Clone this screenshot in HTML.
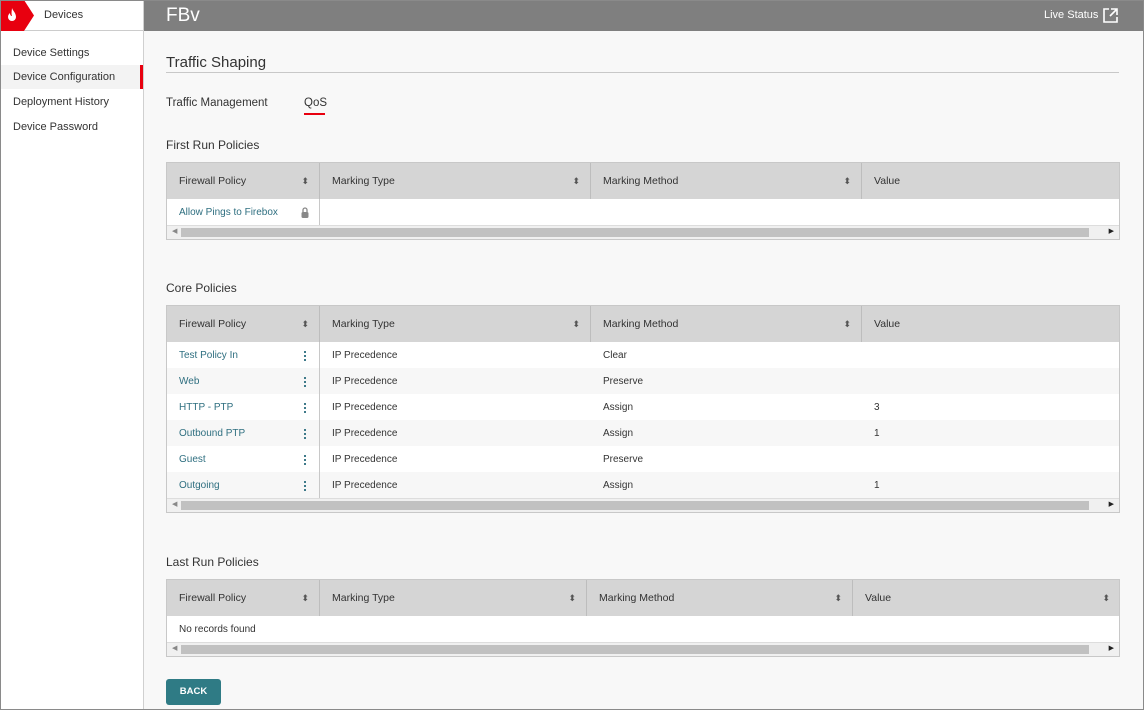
<!DOCTYPE html>
<html><head><meta charset="utf-8"><style>
*{box-sizing:border-box;margin:0;padding:0}
body{width:1144px;height:710px;overflow:hidden;background:#f8f8f8;font-family:"Liberation Sans",sans-serif;font-size:10.5px;color:#333;position:relative}
.frame{position:absolute;inset:0;border:1px solid #8a8a8a;pointer-events:none;z-index:9}
.side{position:absolute;left:0;top:0;width:144px;height:710px;background:#fff;border-right:1px solid #d0d0d0}
.sidehead{height:31px;border-bottom:1px solid #ccc;position:relative}
.logo{position:absolute;left:0;top:0;width:34px;height:31px;background:#e8000f;clip-path:polygon(0 0,24px 0,34px 15.5px,24px 31px,0 31px)}
.sidehead span{position:absolute;left:44px;top:9px;font-size:11px}
.nav{position:absolute;left:13px;font-size:11px;color:#333}
.navsel{position:absolute;left:0;top:65px;width:143px;height:24px;background:#f3f3f3;border-right:3px solid #e8000f}
.top{position:absolute;left:144px;top:0;width:1000px;height:31px;background:#7f7f7f;color:#fff}
.top .t{position:absolute;left:22px;top:5px;font-size:19px}
.top .ls{position:absolute;left:900px;top:9px;font-size:11px}
h2{position:absolute;left:166px;top:54px;font-size:15px;font-weight:normal;color:#333}
.rule{position:absolute;left:166px;top:72px;width:953px;height:1px;background:#c8c8c8}
.lbl{position:absolute;font-size:12px;color:#333}
.tbl{position:absolute;left:166px;width:954px;border:1px solid #c8c8c8;background:#fff}
.hd{height:36px;background:#d5d5d5;position:relative}
.hd div{position:absolute;top:0;height:36px;line-height:36px;padding-left:12px;border-right:1px solid #bdbdbd;font-size:10.5px}
.hd div i{position:absolute;right:10px;font-style:normal;font-size:9px;color:#555}
.row{height:26px;position:relative;line-height:26px}
.row.alt{background:#f7f7f7}
.row div{position:absolute;top:1px;height:26px;padding-left:12px;font-size:10px}
.row .c1{color:#2f6f80}
.vl{position:absolute;top:36px;width:1px;background:#c8c8c8}
.sb{height:14px;background:#f0f0f0;position:relative;border-top:1px solid #ddd}
.sb .bar{position:absolute;left:14px;top:2px;width:908px;height:9px;background:#c1c1c1}
.sb .l{position:absolute;left:5px;top:1px;font-size:7px;color:#888}
.sb .r{position:absolute;right:5px;top:1px;font-size:7px;color:#222}
.dots{position:absolute;left:137px;top:8px;width:2px;height:11px;background:radial-gradient(circle,#2f6f80 1px,transparent 1.2px) 0 0/2px 4px}
.btn{position:absolute;left:166px;top:679px;width:55px;height:26px;background:#2f7b85;border-radius:3px;color:#fff;font-weight:bold;font-size:9.5px;text-align:center;line-height:26px}
</style></head><body>
<div class="side">
 <div class="sidehead"><div class="logo"><svg width="24" height="31" viewBox="0 0 24 31"><path d="M12 8c1 3 4 5 4 9a4 4 0 0 1-8 0c0-2 1-3 2-4 0 2 1 3 2 3-1-3 0-6 0-8z" fill="#fff"/></svg></div><span>Devices</span></div>
 <div class="navsel"></div>
 <div class="nav" style="top:47px">Device Settings</div>
 <div class="nav" style="top:71px">Device Configuration</div>
 <div class="nav" style="top:96px">Deployment History</div>
 <div class="nav" style="top:121px">Device Password</div>
</div>
<div class="top"><div class="t">FBv</div><div class="ls">Live Status</div>
<svg style="position:absolute;left:959px;top:8px" width="15" height="15" viewBox="0 0 15 15" fill="none" stroke="#fff" stroke-width="1.6"><path d="M6 1H1v13h13V9M8 1h6v6M14 1L7 8"/></svg></div>
<h2>Traffic Shaping</h2><div class="rule"></div>
<div class="lbl" style="left:166px;top:97px;font-size:11.5px">Traffic Management</div>
<div class="lbl" style="left:304px;top:97px;font-size:11.5px">QoS</div>
<div style="position:absolute;left:304px;top:113px;width:21px;height:2px;background:#e8000f"></div>
<div class="lbl" style="left:166px;top:138px">First Run Policies</div>

<div class="tbl" style="top:162px">
 <div class="hd"><div style="left:0;width:153px">Firewall Policy<i>⬍</i></div><div style="left:153px;width:271px">Marking Type<i>⬍</i></div><div style="left:424px;width:271px">Marking Method<i>⬍</i></div><div style="left:695px;width:258px;border:none">Value</div></div>
 <div class="row"><div class="c1">Allow Pings to Firebox</div><svg style="position:absolute;left:134px;top:8px" width="8" height="11" viewBox="0 0 8 11"><path d="M2 5V3a2 2 0 0 1 4 0v2" fill="none" stroke="#888" stroke-width="1.3"/><rect x="0.5" y="5" width="7" height="6" rx="1.5" fill="#888"/></svg></div>
 <div class="vl" style="left:152px;height:26px"></div>
 <div class="sb"><span class="l">◀</span><div class="bar"></div><span class="r">▶</span></div>
</div>

<div class="lbl" style="left:166px;top:281px">Core Policies</div>
<div class="tbl" style="top:305px">
 <div class="hd"><div style="left:0;width:153px">Firewall Policy<i>⬍</i></div><div style="left:153px;width:271px">Marking Type<i>⬍</i></div><div style="left:424px;width:271px">Marking Method<i>⬍</i></div><div style="left:695px;width:258px;border:none">Value</div></div>
 <div class="row"><div class="c1">Test Policy In</div><span class="dots"></span><div style="left:153px">IP Precedence</div><div style="left:424px">Clear</div></div>
 <div class="row alt"><div class="c1">Web</div><span class="dots"></span><div style="left:153px">IP Precedence</div><div style="left:424px">Preserve</div></div>
 <div class="row"><div class="c1">HTTP - PTP</div><span class="dots"></span><div style="left:153px">IP Precedence</div><div style="left:424px">Assign</div><div style="left:695px">3</div></div>
 <div class="row alt"><div class="c1">Outbound PTP</div><span class="dots"></span><div style="left:153px">IP Precedence</div><div style="left:424px">Assign</div><div style="left:695px">1</div></div>
 <div class="row"><div class="c1">Guest</div><span class="dots"></span><div style="left:153px">IP Precedence</div><div style="left:424px">Preserve</div></div>
 <div class="row alt"><div class="c1">Outgoing</div><span class="dots"></span><div style="left:153px">IP Precedence</div><div style="left:424px">Assign</div><div style="left:695px">1</div></div>
 <div class="vl" style="left:152px;height:156px"></div>
 <div class="sb"><span class="l">◀</span><div class="bar"></div><span class="r">▶</span></div>
</div>

<div class="lbl" style="left:166px;top:555px">Last Run Policies</div>
<div class="tbl" style="top:579px">
 <div class="hd"><div style="left:0;width:153px">Firewall Policy<i>⬍</i></div><div style="left:153px;width:267px">Marking Type<i>⬍</i></div><div style="left:420px;width:266px">Marking Method<i>⬍</i></div><div style="left:686px;width:267px;border:none">Value<i>⬍</i></div></div>
 <div class="row"><div>No records found</div></div>
 <div class="sb"><span class="l">◀</span><div class="bar"></div><span class="r">▶</span></div>
</div>
<div class="btn">BACK</div>
<div class="frame"></div>
</body></html>
